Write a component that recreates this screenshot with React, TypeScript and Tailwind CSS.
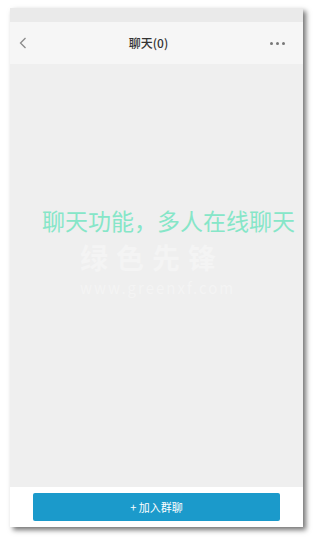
import React from 'react';

const App: React.FC = () => {
    return (
        <div
            className="w-[314px] h-[538px] bg-white pt-[8px] pl-[10px]"
            style={{ fontFamily: '"Noto Sans CJK SC", "Liberation Sans", sans-serif' }}
        >
            {/* 手机屏幕 */}
            <div className="w-[293px] h-[519px] flex flex-col bg-[#efefef] shadow-[3px_3px_5px_rgba(0,0,0,0.55)]">
                {/* 状态栏 */}
                <div className="h-[14px] bg-[#eaeaea]" />

                {/* 顶部导航 */}
                <div className="h-[42px] bg-[#f6f6f6] flex items-center justify-between px-[9px]">
                    <svg width="8" height="12" viewBox="0 0 8 12" fill="none">
                        <path d="M6.5 1 L1.5 6 L6.5 11" stroke="#8a8a8a" strokeWidth="1.3" />
                    </svg>
                    <span className="text-[12px] text-[#333] leading-none font-medium">聊天(0)</span>
                    <div className="flex gap-[3px] mr-[9px]">
                        <span className="w-[3px] h-[3px] rounded-full bg-[#777]" />
                        <span className="w-[3px] h-[3px] rounded-full bg-[#777]" />
                        <span className="w-[3px] h-[3px] rounded-full bg-[#777]" />
                    </div>
                </div>

                {/* 聊天内容 */}
                <div className="flex-1 flex flex-col items-start pt-[145px] pl-[32px]">
                    <div className="text-[23px] leading-none text-[#86e6c8] whitespace-nowrap">
                        聊天功能，多人在线聊天
                    </div>
                    <div className="mt-[10px] ml-[38px] text-[28px] leading-[30px] text-[#f4f4f4] font-bold tracking-[8px]">
                        绿色先锋
                    </div>
                    <div className="mt-[8px] ml-[38px] text-[15px] leading-[16px] text-[#f4f4f4] tracking-[2px]">
                        www.greenxf.com
                    </div>
                </div>

                {/* 底部按钮 */}
                <div className="h-[40px] bg-white flex items-center justify-center">
                    <button className="w-[247px] h-[28px] rounded-[2px] bg-[#1b9acb] text-white text-[11px] leading-none">
                        + 加入群聊
                    </button>
                </div>
            </div>
        </div>
    );
};

export default App;
